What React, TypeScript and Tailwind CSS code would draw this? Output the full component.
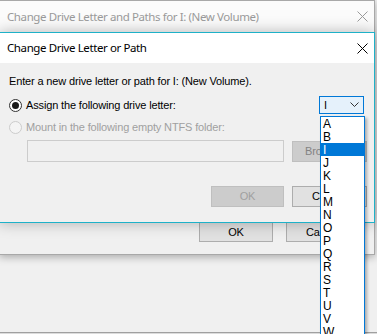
const letters = ["A", "B", "I", "J", "K", "L", "M", "N", "O", "P", "Q", "R", "S", "T", "U", "V", "W", "X"];

function Radio({ checked, disabled }: { checked?: boolean; disabled?: boolean }) {
  return (
    <span
      className={
        "flex h-[13px] w-[13px] items-center justify-center rounded-full border " +
        (disabled ? "border-[#cccccc] bg-[#f4f4f4]" : "border-[#333333] bg-white")
      }
    >
      {checked && <span className="h-[7px] w-[7px] rounded-full bg-[#1a1a1a]" />}
    </span>
  );
}

function CloseIcon({ color }: { color: string }) {
  return (
    <svg width="11" height="11" viewBox="0 0 11 11">
      <path d="M0.5 0.5L10.5 10.5M10.5 0.5L0.5 10.5" stroke={color} strokeWidth="1" />
    </svg>
  );
}

const titleFont = "font-['Noto_Sans',sans-serif] text-[11.5px] tracking-[-0.4px]";

export default function App() {
  return (
    <div className="relative h-[334px] w-[377px] overflow-hidden bg-[#f0f0f0] font-['Liberation_Sans',Arial,sans-serif] text-[11px] leading-none tracking-[-0.15px] text-black">
      {/* bottom edge of the window behind */}
      <div className="absolute bottom-0 left-0 right-0 h-[2px] border-t border-[#a0a0a0] bg-[#dcdcdc]" />

      {/* outer window */}
      <div className="absolute left-[-1px] top-0 flex h-[255px] w-[376px] flex-col border border-[#a8a8a8] bg-[#f0f0f0] shadow-[0_2px_8px_rgba(0,0,0,0.3)]">
        <div className="flex h-[31px] items-center justify-between bg-[#fbfbfb] pl-[7px] pr-[6px]">
          <span className={titleFont + " text-[#9a9a9a]"}>Change Drive Letter and Paths for I: (New Volume)</span>
          <CloseIcon color="#9a9a9a" />
        </div>
        <div className="flex-1" />
        <div className="flex gap-[13px] pb-[12px] pl-[199px]">
          <div className="flex h-[20px] w-[74px] items-center justify-center border border-[#adadad] bg-[#e1e1e1]">OK</div>
          <div className="flex h-[20px] w-[75px] shrink-0 items-center border border-[#adadad] bg-[#e1e1e1] pl-[19px]">Cancel</div>
        </div>
      </div>

      {/* inner dialog */}
      <div className="absolute left-[-1px] top-[32px] flex h-[191px] w-[376px] flex-col border border-[#1eb1c8] bg-[#f0f0f0] shadow-[0_0_14px_rgba(0,0,0,0.28)]">
        <div className="flex h-[30px] items-center justify-between bg-white pl-[7px] pr-[6px]">
          <span className={titleFont}>Change Drive Letter or Path</span>
          <CloseIcon color="#000000" />
        </div>
        <div className="flex flex-1 flex-col pl-[9px] pt-[13px]">
          <span>Enter a new drive letter or path for I: (New Volume).</span>
          <div className="mt-[9px] flex h-[18px] items-center">
            <Radio checked />
            <span className="ml-[4px]">Assign the following drive letter:</span>
            <div className="ml-auto mr-[10px] flex h-[18px] w-[45px] items-center justify-between border border-[#0078d7] bg-[#e5f1fb] pl-[4px] pr-[4px]">
              <span>I</span>
              <svg width="9" height="6" viewBox="0 0 9 6">
                <path d="M0.5 0.5L4.5 4.5L8.5 0.5" stroke="#333" strokeWidth="1" fill="none" />
              </svg>
            </div>
          </div>
          <div className="mt-[7px] flex h-[13px] items-center">
            <Radio disabled />
            <span className="ml-[4px] text-[#a0a0a0]">Mount in the following empty NTFS folder:</span>
          </div>
          <div className="mt-[6px] flex items-center gap-[8px] pl-[18px]">
            <div className="h-[22px] w-[257px] shrink-0 border border-[#cccccc] bg-[#f0f0f0]" />
            <div className="flex h-[21px] w-[75px] shrink-0 items-center border border-[#bfbfbf] bg-[#cccccc] pl-[12px] text-[#838383]">Browse...</div>
          </div>
          <div className="mt-[24px] flex gap-[8px] pl-[202px]">
            <div className="flex h-[21px] w-[73px] shrink-0 items-center justify-center border border-[#bfbfbf] bg-[#cccccc] text-[#a0a0a0]">OK</div>
            <div className="flex h-[21px] w-[75px] shrink-0 items-center border border-[#adadad] bg-[#e1e1e1] pl-[19px]">Cancel</div>
          </div>
        </div>
      </div>

      {/* open drop-down list */}
      <div className="absolute left-[320px] top-[116px] w-[45px] border border-[#0078d7] bg-white text-[12px] tracking-normal shadow-[2px_2px_3px_rgba(0,0,0,0.3)]">
        {letters.map((l) => (
          <div
            key={l}
            className={
              "flex h-[13px] items-center pl-[2px] " + (l === "I" ? "bg-[#0078d7] text-white" : "")
            }
          >
            {l}
          </div>
        ))}
      </div>
    </div>
  );
}
